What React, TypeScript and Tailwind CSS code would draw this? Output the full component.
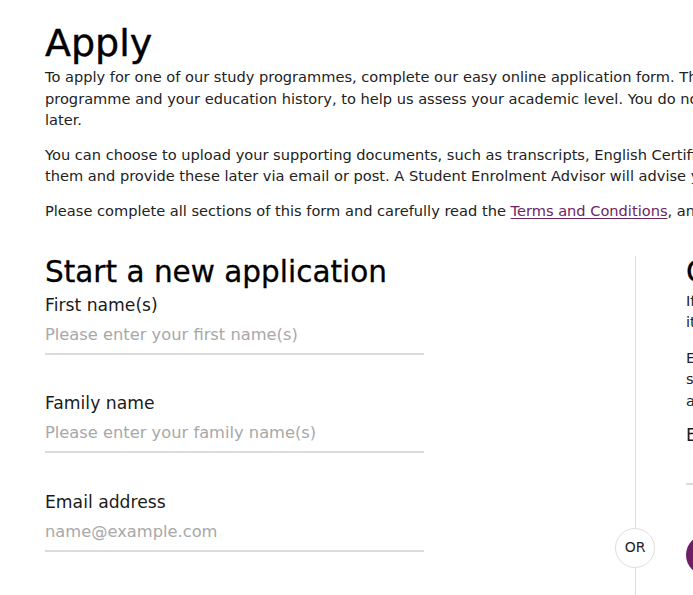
import React from "react";

const font = { fontFamily: '"DejaVu Sans", "Liberation Sans", sans-serif' };

function Field({ label, placeholder }: { label: string; placeholder: string }) {
  return (
    <div className="flex flex-col">
      <label className="text-[17.2px] leading-[22px] text-[#1a1a1a]">{label}</label>
      <div className="mt-[8px] h-[31px] text-[16.3px] leading-[22px] text-[#a8a8a8] border-b-2 border-[#dcdcdc] w-[379px] whitespace-nowrap">
        {placeholder}
      </div>
    </div>
  );
}

export default function App() {
  return (
    <div className="w-[693px] h-[595px] overflow-hidden bg-white" style={font}>
      <div className="w-[1200px] pl-[45px] pt-[21px]">
        <h1 className="text-[38px] leading-[44px] text-black [-webkit-text-stroke:0.4px_black]">Apply</h1>
        <div className="mt-[1px] text-[14.6px] leading-[21.6px] text-[#222] whitespace-nowrap">
          <p>
            To apply for one of our study programmes, complete our easy online application form. The form will ask you about your chosen
            <br />
            programme and your education history, to help us assess your academic level. You do not need to upload documents now; you can add them
            <br />
            later.
          </p>
          <p className="mt-[13px]">
            You can choose to upload your supporting documents, such as transcripts, English Certificates and your ID, or you can skip
            <br />
            them and provide these later via email or post. A Student Enrolment Advisor will advise you on what is needed.
          </p>
          <p className="mt-[13px]">
            Please complete all sections of this form and carefully read the{" "}
            <a className="text-[#6d2463] underline underline-offset-2">Terms and Conditions</a>, and the Privacy Policy before submitting.
          </p>
        </div>

        <div className="mt-[34px] flex">
          <div className="w-[590px]">
            <h2 className="text-[29.5px] leading-[32px] text-black [-webkit-text-stroke:0.3px_black] whitespace-nowrap">Start a new application</h2>
            <div className="mt-[6px] flex flex-col gap-[37.5px]">
              <Field label="First name(s)" placeholder="Please enter your first name(s)" />
              <Field label="Family name" placeholder="Please enter your family name(s)" />
              <Field label="Email address" placeholder="name@example.com" />
            </div>
          </div>
          <div className="relative w-[1px] bg-[#dcdcdc] h-[400px]">
            <div className="absolute left-[-20px] top-[272px] w-[40px] h-[40px] rounded-full border border-[#dedede] bg-white flex items-center justify-center text-[14px] text-[#222]">
              OR
            </div>
          </div>
          <div className="pl-[50px] w-[460px] whitespace-nowrap">
            <h2 className="text-[29.5px] leading-[32px] text-black [-webkit-text-stroke:0.3px_black]">Continue an application</h2>
            <p className="mt-[2px] text-[14.6px] leading-[21.6px] text-[#222]">
              If you have already started an application, you can continue
              <br />
              it here.
            </p>
            <p className="mt-[14px] text-[14.6px] leading-[21.6px] text-[#222]">
              Enter the email address you used when you
              <br />
              started your application and we will send you
              <br />
              a link to continue.
            </p>
            <div className="mt-[12px]">
              <Field label="Email address" placeholder="" />
            </div>
            <button className="mt-[50px] h-[40px] px-[28px] rounded-full bg-[#6d1f66] text-white text-[15px]">
              Send link
            </button>
          </div>
        </div>
      </div>
    </div>
  );
}
